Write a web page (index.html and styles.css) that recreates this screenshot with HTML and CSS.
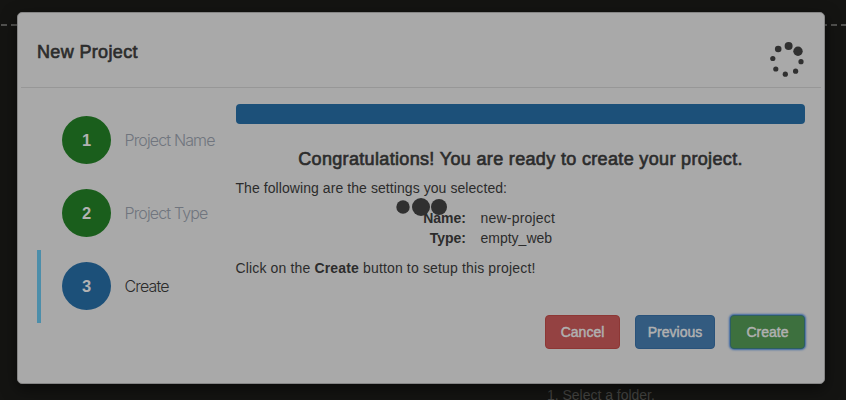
FILE: index.html
```html
<!DOCTYPE html>
<html lang="en">
<head>
<meta charset="utf-8">
<title>New Project</title>
<link rel="stylesheet" href="styles.css">
</head>
<body>
<svg class="dashes" width="846" height="2"><path d="M-5 1H846" stroke="#51514f" stroke-width="2" stroke-dasharray="6 4" stroke-dashoffset="-6"/></svg>
<p class="hint">1. Select a folder.</p>
<main class="modal">
  <header class="head">
    <h1 class="title"><span>New Project</span></h1>
    <svg class="spinner" width="40" height="40" viewBox="768 40 40 40" fill="#303030">
      <circle cx="788.6" cy="46" r="4"/><circle cx="798" cy="51.3" r="4.7"/><circle cx="801" cy="61.7" r="2.6"/><circle cx="795.6" cy="71.2" r="2.6"/><circle cx="785.3" cy="74.2" r="2.6"/><circle cx="775.8" cy="69" r="2.6"/><circle cx="772.8" cy="58.5" r="2.6"/><circle cx="778.2" cy="49" r="3.3"/>
    </svg>
  </header>
  <div class="body">
    <ol class="steps">
      <li class="step"><span class="num">1</span><span class="label">Project Name</span></li>
      <li class="step"><span class="num">2</span><span class="label">Project Type</span></li>
      <li class="step active"><span class="num">3</span><span class="label">Create</span></li>
    </ol>
    <section class="content">
      <div class="progress"></div>
      <h2 class="congrats">Congratulations! You are ready to create your project.</h2>
      <p class="line intro">The following are the settings you selected:</p>
      <dl class="settings">
        <dt>Name:</dt><dd class="v1">new-project</dd>
        <dt>Type:</dt><dd>empty_web</dd>
      </dl>
      <p class="line outro">Click on the <b>Create</b> button to setup this project!</p>
      <div class="buttons">
        <button class="btn cancel">Cancel</button>
        <button class="btn previous">Previous</button>
        <button class="btn create">Create</button>
      </div>
    </section>
  </div>
</main>
<svg class="loader" width="54" height="20" viewBox="395 197 54 20" fill="#303030"><circle cx="403" cy="207" r="6.7"/><circle cx="421" cy="207" r="9"/><circle cx="439" cy="207" r="8"/></svg>
</body>
</html>
```
FILE: styles.css
```css
* { box-sizing: border-box; }
body {
  margin: 0;
  width: 846px;
  height: 400px;
  padding: 12px 21px 0 17px;
  overflow: hidden;
  position: relative;
  background: #141412;
  color: #2c2c2c;
  font: 14px/20px "Liberation Sans", Arial, sans-serif;
}
h1, h2, p, ol, dl, dd { margin: 0; padding: 0; }
.dashes { position: absolute; left: 0; top: 24px; }
.hint {
  position: absolute;
  left: 547px;
  top: 385px;
  color: #434341;
  letter-spacing: -0.02px;
  white-space: nowrap;
}
.modal {
  position: relative;
  width: 808px;
  height: 372px;
  padding: 0 3px;
  border: 1px solid #858585;
  border-radius: 5px;
  background: #a9a9a9;
  box-shadow: 0 5px 15px rgba(0, 0, 0, .5);
}
.head {
  display: flex;
  justify-content: space-between;
  align-items: flex-start;
  height: 75px;
  padding: 27px 13px 0 16px;
  border-bottom: 1px solid #979797;
}
.title {
  font-size: 18px;
  line-height: 24px;
  font-weight: 400;
  -webkit-text-stroke: .65px #2c2c2c;
  letter-spacing: .35px;
}
.body { display: flex; padding: 16px 16px 0; }
.steps { width: 199px; margin-top: -1px; list-style: none; }
.step {
  display: flex;
  align-items: center;
  height: 73px;
  padding-left: 21px;
  border-left: 4px solid transparent;
}
.active { height: 75px; padding-bottom: 2px; border-left: 0; padding-left: 25px; background: linear-gradient(#4c8eaa, #4c8eaa) 0 1px / 4px 73px no-repeat; }
.num {
  width: 49px;
  height: 48px;
  border-radius: 50%;
  background: #1a5e1c;
  color: #b2b2b2;
  font-size: 16.5px;
  font-weight: 700;
  line-height: 49px;
  text-align: center;
}
.active .num { background: #1c5079; }
.label {
  margin-left: 13.5px;
  color: #70757e;
  font: 300 16px/20px Inter, "Liberation Sans", sans-serif;
  letter-spacing: -.86px;
  white-space: nowrap;
}
.active .label { color: #2b2b2b; }
.content { width: 569px; }
.progress { height: 20px; border-radius: 4px; background: #1c5079; }
.congrats {
  margin-top: 25px;
  font-size: 18px;
  line-height: 20px;
  font-weight: 400;
  text-align: center;
  white-space: nowrap;
  letter-spacing: .34px;
  -webkit-text-stroke: .65px #2c2c2c;
}
.line { margin-left: -.5px; }
.intro { margin-top: 9px; letter-spacing: .07px; }
.settings {
  display: grid;
  grid-template-columns: 230px auto;
  column-gap: 14.5px;
  margin-top: 10px;
}
dt { font-weight: 700; text-align: right; }
.v1 { letter-spacing: .2px; }
.outro { margin-top: 10px; letter-spacing: .15px; }
.buttons { display: flex; justify-content: flex-end; gap: 15px; margin-top: 37px; }
.btn {
  height: 34px;
  padding: 0;
  border: 1px solid;
  border-radius: 4px;
  color: #b0b0b0;
  font: 14px/20px "Liberation Sans", Arial, sans-serif;
  -webkit-text-stroke: .5px #b0b0b0;
}
.cancel { width: 75px; background: #944242; border-color: #8d3735; }
.previous { width: 80px; background: #335b80; border-color: #29527a; }
.create {
  width: 75px;
  background: #3d703e;
  border-color: #2c5e62;
  box-shadow: 0 0 2px 1px #3c67a5;
}
.loader { position: absolute; left: 395px; top: 197px; }
```
